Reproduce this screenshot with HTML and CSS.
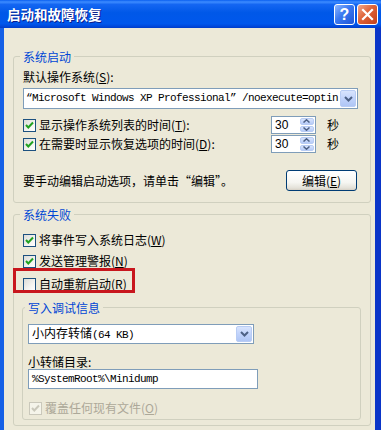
FILE: index.html
```html
<!DOCTYPE html>
<html lang="zh-CN">
<head>
<meta charset="utf-8">
<title>启动和故障恢复</title>
<link rel="stylesheet" href="styles.css">
</head>
<body>
<div class="window">
  <div class="titlebar">
    <span class="title">启动和故障恢复</span>
    <div class="tbtns">
      <span class="tbtn help">?</span>
      <span class="tbtn close"><svg width="13" height="13" viewBox="0 0 13 13"><path d="M2 2 L11 11 M11 2 L2 11" stroke="#fff" stroke-width="2.2" stroke-linecap="square"/></svg></span>
    </div>
  </div>
  <div class="frame">
    <fieldset class="group g1">
      <legend>系统启动</legend>
      <div class="label l1">默认操作系统(<u>S</u>):</div>
      <div class="combo c1">
        <span class="combo-text mono">“Microsoft Windows XP Professional” /noexecute=optin</span>
        <span class="drop"><svg width="9" height="6" viewBox="0 0 9 6"><path d="M1 1 L4.5 4.5 L8 1" fill="none" stroke="#4D6185" stroke-width="2"/></svg></span>
      </div>
      <div class="row spin-row r1">
        <span class="cb"><svg width="11" height="11" viewBox="0 0 11 11"><path d="M2 5 L4.3 7.5 L9 2.5" fill="none" stroke="#21A121" stroke-width="2"/></svg></span>
        <span class="cb-label">显示操作系统列表的时间(<u>T</u>):</span>
        <span class="spinner"><span class="val">30</span><span class="spin"><span class="sbtn"><svg width="7" height="4" viewBox="0 0 7 4"><path d="M0.5 3.5 L3.5 0.8 L6.5 3.5" fill="none" stroke="#4D6185" stroke-width="1.5"/></svg></span><span class="sbtn"><svg width="7" height="4" viewBox="0 0 7 4"><path d="M0.5 0.5 L3.5 3.2 L6.5 0.5" fill="none" stroke="#4D6185" stroke-width="1.5"/></svg></span></span></span>
        <span class="sec">秒</span>
      </div>
      <div class="row spin-row r2">
        <span class="cb"><svg width="11" height="11" viewBox="0 0 11 11"><path d="M2 5 L4.3 7.5 L9 2.5" fill="none" stroke="#21A121" stroke-width="2"/></svg></span>
        <span class="cb-label">在需要时显示恢复选项的时间(<u>D</u>):</span>
        <span class="spinner"><span class="val">30</span><span class="spin"><span class="sbtn"><svg width="7" height="4" viewBox="0 0 7 4"><path d="M0.5 3.5 L3.5 0.8 L6.5 3.5" fill="none" stroke="#4D6185" stroke-width="1.5"/></svg></span><span class="sbtn"><svg width="7" height="4" viewBox="0 0 7 4"><path d="M0.5 0.5 L3.5 3.2 L6.5 0.5" fill="none" stroke="#4D6185" stroke-width="1.5"/></svg></span></span></span>
        <span class="sec">秒</span>
      </div>
      <div class="row edit-row">
        <span class="plain">要手动编辑启动选项，请单击“编辑”。</span>
        <span class="btn">编辑(<u>E</u>)</span>
      </div>
    </fieldset>

    <fieldset class="group g2">
      <legend>系统失败</legend>
      <div class="row ra">
        <span class="cb"><svg width="11" height="11" viewBox="0 0 11 11"><path d="M2 5 L4.3 7.5 L9 2.5" fill="none" stroke="#21A121" stroke-width="2"/></svg></span>
        <span class="cb-label">将事件写入系统日志(<u>W</u>)</span>
      </div>
      <div class="row rb">
        <span class="cb"><svg width="11" height="11" viewBox="0 0 11 11"><path d="M2 5 L4.3 7.5 L9 2.5" fill="none" stroke="#21A121" stroke-width="2"/></svg></span>
        <span class="cb-label">发送管理警报(<u>N</u>)</span>
      </div>
      <div class="row rc marked">
        <span class="cb"></span>
        <span class="cb-label">自动重新启动(<u>R</u>)</span>
      </div>

      <fieldset class="group inner">
        <legend>写入调试信息</legend>
        <div class="combo c2">
          <span class="combo-text">小内存转储<span class="mono">(64 KB)</span></span>
          <span class="drop"><svg width="9" height="6" viewBox="0 0 9 6"><path d="M1 1 L4.5 4.5 L8 1" fill="none" stroke="#4D6185" stroke-width="2"/></svg></span>
        </div>
        <div class="label l2">小转储目录:</div>
        <div class="input mono">%SystemRoot%\Minidump</div>
        <div class="row rd disabled">
          <span class="cb dis"><svg width="11" height="11" viewBox="0 0 11 11"><path d="M2 5 L4.3 7.5 L9 2.5" fill="none" stroke="#CAC8BB" stroke-width="2"/></svg></span>
          <span class="cb-label">覆盖任何现有文件(<u>O</u>)</span>
        </div>
      </fieldset>
    </fieldset>
  </div>
</div>
</body>
</html>
```

FILE: styles.css
```css
html, body {
  margin: 0;
  padding: 0;
  background: #ECE9D8;
}
body {
  width: 381px;
  height: 430px;
  overflow: hidden;
  font-family: "Noto Sans CJK SC", "Liberation Sans", sans-serif;
  font-size: 12px;
  color: #000;
}
.window {
  width: 381px;
  height: 430px;
  display: flex;
  flex-direction: column;
}
.titlebar {
  height: 28px;
  flex: none;
  display: flex;
  align-items: center;
  padding: 0 3px 0 7px;
  background: linear-gradient(to bottom, #0A5FF0 0%, #3D8CFF 7%, #1466F2 16%, #0058E8 45%, #0057EC 85%, #0046D8 95%, #003CC8 100%);
}
.title {
  flex: 1;
  color: #fff;
  font-weight: bold;
  font-size: 13.5px;
  line-height: 18px;
  text-shadow: 1px 1px 0 #0A1E8C;
}
.tbtns {
  display: flex;
  gap: 2px;
}
.tbtn {
  width: 21px;
  height: 21px;
  box-sizing: border-box;
  border: 1px solid #fff;
  border-radius: 3px;
  display: flex;
  align-items: center;
  justify-content: center;
}
.help {
  background: linear-gradient(135deg, #8DB6FF 0%, #3A78F0 45%, #1F55D6 100%);
  color: #fff;
  font-family: "Liberation Sans", sans-serif;
  font-weight: bold;
  font-size: 16px;
  line-height: 19px;
}
.close {
  background: linear-gradient(135deg, #F2A88A 0%, #DE6238 45%, #C2401A 100%);
}
.frame {
  flex: 1;
  box-sizing: border-box;
  border-left: 4px solid #1560E6;
  border-right: 6px solid #0A35C8;
  background: #ECE9D8;
  padding: 0 4px 0 9px;
}
.group {
  border: 1px solid #D0D0BF;
  border-radius: 3px;
  margin: 0;
  min-width: 0;
  box-sizing: border-box;
}
.group > legend {
  color: #0046D5;
  font-size: 12px;
  line-height: 15px;
  padding: 0 3px;
  margin-left: -3px;
}
.g1 {
  margin-top: 21px;
  padding: 4px 12px 11px 9px;
}
.g2 {
  margin-top: 4px;
  padding: 9px 12px 5px 9px;
}
.inner {
  margin: 7px -3px 0 -1px;
  padding: 9px 8px 2px 5px;
}
.label {
  line-height: 18px;
  height: 18px;
  white-space: nowrap;
}
.l2 {
  margin-top: 11px;
  line-height: 14px;
  height: 14px;
}
u {
  text-decoration: underline;
  text-underline-offset: 1px;
}
.mono {
  font-family: "Liberation Mono", monospace;
  font-size: 11px;
  letter-spacing: -0.6px;
}
.combo {
  display: flex;
  align-items: center;
  box-sizing: border-box;
  border: 1px solid #7F9DB9;
  background: #fff;
  white-space: nowrap;
}
.c1 {
  height: 21px;
  margin-top: 2px;
}
.c2 {
  height: 20px;
  width: 226px;
}
.combo-text {
  flex: 1;
  overflow: hidden;
  padding-left: 2px;
  line-height: 17px;
}
.c2 .combo-text {
  padding-left: 3px;
}
.drop {
  width: 16px;
  align-self: stretch;
  margin: 1px;
  box-sizing: border-box;
  border: 1px solid #B8CCF4;
  border-radius: 2px;
  background: linear-gradient(to bottom, #D8E4FD 0%, #C1D3FB 50%, #AFC6F5 100%);
  display: flex;
  align-items: center;
  justify-content: center;
}
.row {
  display: flex;
  align-items: center;
  height: 18px;
  white-space: nowrap;
  line-height: 18px;
}
.r1 { margin-top: 7px; }
.r2 { margin-top: 1px; }
.edit-row {
  margin-top: 17px;
  height: 21px;
}
.ra { margin-top: 0; }
.rb { margin-top: 3px; }
.rc { margin-top: 5px; }
.rd { margin-top: 10px; margin-left: 1px; }
.cb {
  width: 13px;
  height: 13px;
  flex: none;
  box-sizing: border-box;
  border: 1px solid #1C5180;
  background: linear-gradient(135deg, #DCDCD7 0%, #F4F4F0 60%, #FFFFFF 100%);
  display: flex;
  align-items: center;
  justify-content: center;
}
.cb.dis {
  border-color: #CAC8BB;
  background: #F5F4EA;
}
.cb-label {
  margin-left: 3px;
}
.spin-row .cb-label {
  flex: 1;
}
.disabled .cb-label {
  color: #ACA899;
}
.spinner {
  width: 45px;
  height: 18px;
  box-sizing: border-box;
  border: 1px solid #7F9DB9;
  background: #fff;
  display: flex;
}
.val {
  flex: 1;
  padding-left: 3px;
  font-family: "Liberation Sans", sans-serif;
  font-size: 12px;
  line-height: 16px;
}
.spin {
  width: 15px;
  display: flex;
  flex-direction: column;
  gap: 1px;
  padding: 1px 1px 1px 0;
  box-sizing: border-box;
}
.sbtn {
  flex: 1;
  border: 1px solid #B8CCF4;
  border-radius: 2px;
  background: linear-gradient(to bottom, #D8E4FD, #B6CBF7);
  display: flex;
  align-items: center;
  justify-content: center;
}
.sec {
  margin-left: 11px;
  margin-right: 19px;
}
.plain {
  flex: 1;
}
.btn {
  width: 71px;
  height: 21px;
  box-sizing: border-box;
  margin-right: 1px;
  border: 1px solid #003C74;
  border-radius: 3px;
  background: linear-gradient(to bottom, #FFFFFF 0%, #F6F6F2 60%, #E3E1D8 90%, #D6D0C5 100%);
  display: flex;
  align-items: center;
  justify-content: center;
  line-height: 18px;
}
.input {
  width: 230px;
  height: 20px;
  box-sizing: border-box;
  border: 1px solid #7F9DB9;
  background: #fff;
  padding-left: 3px;
  line-height: 18px;
  white-space: nowrap;
}
.marked {
  position: relative;
}
.marked::after {
  content: "";
  position: absolute;
  left: -10px;
  top: -7px;
  width: 122px;
  height: 25px;
  box-sizing: border-box;
  border: 3px solid #C8161D;
}
```
